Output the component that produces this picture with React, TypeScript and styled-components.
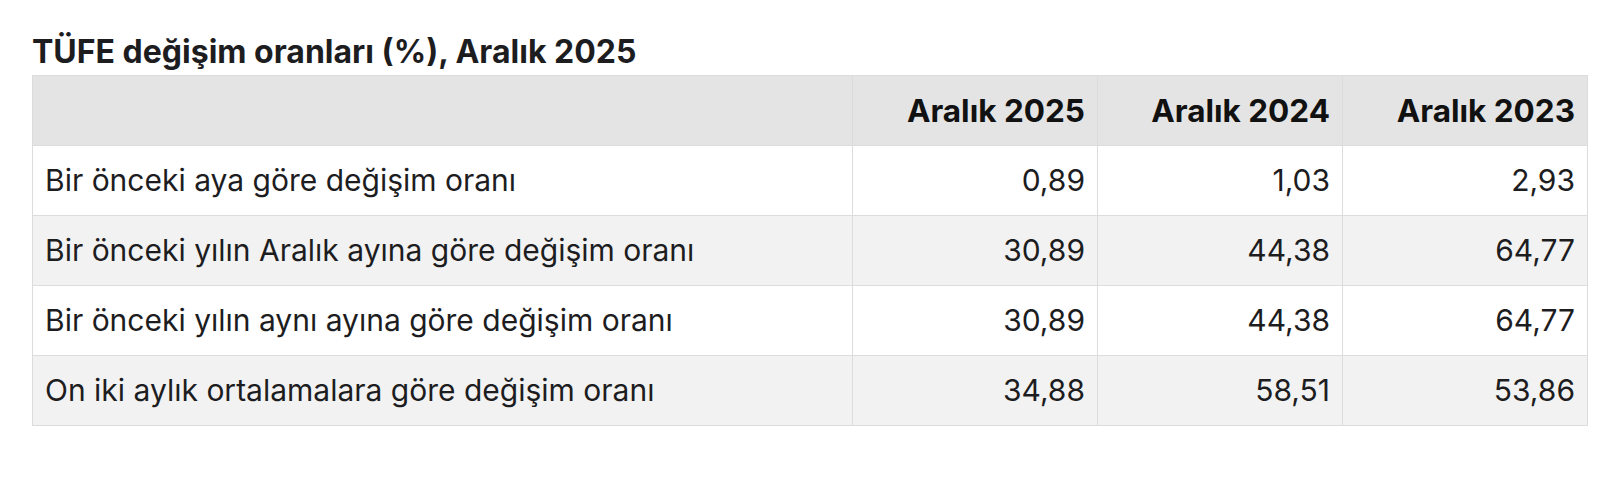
import styled, { createGlobalStyle } from "styled-components";

const GlobalStyle = createGlobalStyle`
  body {
    margin: 0;
    background: #fff;
    font-family: Inter, "Noto Sans", "Liberation Sans", sans-serif;
    color: #1d1d1f;
  }
`;

const Page = styled.div`
  padding: 33px 32px;
`;

const Caption = styled.h2`
  margin: 0 0 4px;
  font-size: 32px;
  line-height: 38px;
  font-weight: 700;
  color: #1d1d1f;
`;

const Table = styled.table`
  width: 100%;
  border-collapse: collapse;
  font-size: 30px;
`;

const HeadCell = styled.th<{ $num?: boolean }>`
  background: #e4e4e4;
  border: 1px solid #dcdcdc;
  padding: 16px 12px;
  line-height: 37px;
  font-size: 31.5px;
  font-weight: 700;
  color: #111;
  text-align: ${(p) => (p.$num ? "right" : "left")};
  width: ${(p) => (p.$num ? "220px" : "auto")};
`;

const Row = styled.tr<{ $alt?: boolean }>`
  background: ${(p) => (p.$alt ? "#f2f2f2" : "#ffffff")};
`;

const Cell = styled.td<{ $num?: boolean }>`
  border: 1px solid #dcdcdc;
  padding: 16px 12px;
  line-height: 37px;
  text-align: ${(p) => (p.$num ? "right" : "left")};
`;

const years = ["Aralık 2025", "Aralık 2024", "Aralık 2023"];

const rows = [
  { label: "Bir önceki aya göre değişim oranı", values: ["0,89", "1,03", "2,93"] },
  { label: "Bir önceki yılın Aralık ayına göre değişim oranı", values: ["30,89", "44,38", "64,77"] },
  { label: "Bir önceki yılın aynı ayına göre değişim oranı", values: ["30,89", "44,38", "64,77"] },
  { label: "On iki aylık ortalamalara göre değişim oranı", values: ["34,88", "58,51", "53,86"] },
];

export default function App() {
  return (
    <Page>
      <GlobalStyle />
      <Caption>TÜFE değişim oranları (%), Aralık 2025</Caption>
      <Table>
        <thead>
          <tr>
            <HeadCell></HeadCell>
            {years.map((y) => (
              <HeadCell key={y} $num>
                {y}
              </HeadCell>
            ))}
          </tr>
        </thead>
        <tbody>
          {rows.map((r, i) => (
            <Row key={r.label} $alt={i % 2 === 1}>
              <Cell>{r.label}</Cell>
              {r.values.map((v, j) => (
                <Cell key={j} $num>
                  {v}
                </Cell>
              ))}
            </Row>
          ))}
        </tbody>
      </Table>
    </Page>
  );
}
